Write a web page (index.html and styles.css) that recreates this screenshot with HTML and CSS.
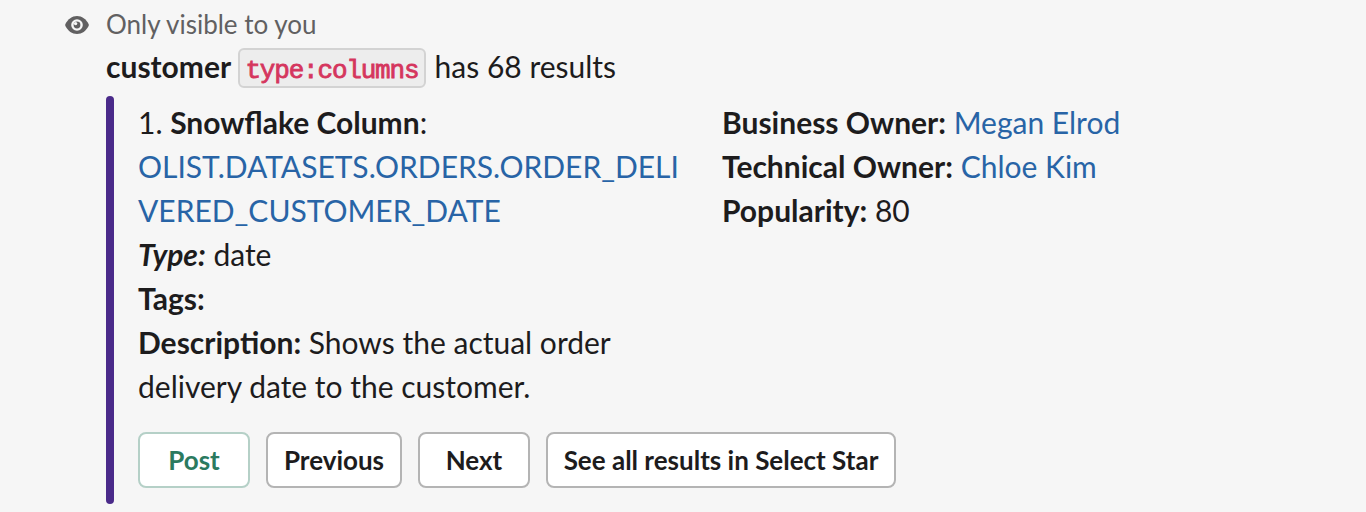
FILE: index.html
```html
<!DOCTYPE html>
<html lang="en">
<head>
    <meta charset="UTF-8">
    <meta name="viewport" content="width=device-width, initial-scale=1.0">
    <title>Select Star results</title>
    <link rel="stylesheet" href="styles.css">
</head>
<body>

    <div class="message">
        <div class="visibility">
            <svg class="eye" viewBox="0 0 24 18" width="24" height="18">
                <path d="M0.400 8C3 3 7 0 12 0S21 3 23.600 8Q24 9 23.600 10C21 15 17 18 12 18S3 15 0.400 10Q0 9 0.400 8Z" fill="#616061"/>
                <circle cx="12" cy="9" r="5.800" fill="#f6f6f6"/>
                <circle cx="12" cy="9" r="3.400" fill="#616061"/>
                <circle cx="10.600" cy="7.600" r="1.700" fill="#f6f6f6"/>
            </svg>
            <span>Only visible to you</span>
        </div>

        <div class="summary"><b>customer</b> <code>type:columns</code> has 68 results</div>

        <div class="attachment">
            <div class="bar"></div>
            <div class="content">
                <div class="fields">
                    <div class="field">
                        1. <b>Snowflake Column</b>:<br>
                        <a href="#">OLIST.DATASETS.ORDERS.ORDER_DELIVERED_CUSTOMER_DATE</a><br>
                        <b><i>Type:</i></b> date<br>
                        <b>Tags:</b><br>
                        <b>Description:</b> Shows the actual order delivery date to the customer.
                    </div>
                    <div class="field">
                        <b>Business Owner:</b> <a href="#">Megan Elrod</a><br>
                        <b>Technical Owner:</b> <a href="#">Chloe Kim</a><br>
                        <b>Popularity:</b> 80
                    </div>
                </div>
                <div class="actions">
                    <button class="primary post">Post</button>
                    <button class="previous">Previous</button>
                    <button class="next">Next</button>
                    <button class="see-all">See all results in Select Star</button>
                </div>
            </div>
        </div>
    </div>

</body>
</html>
```

FILE: styles.css
```css
* {
    box-sizing: border-box;
}

body {
    margin: 0;
    height: 512px;
    overflow: hidden;
    background-color: #f6f6f6;
    color: #1d1c1d;
    font-family: Lato, sans-serif;
    font-size: 30px;
    line-height: 44px;
}

a {
    color: #2864a6;
    text-decoration: none;
}

.message {
    padding: 6px 0 0 65px;
}

.visibility {
    display: flex;
    align-items: center;
    gap: 17px;
    height: 36px;
    color: #616061;
    font-size: 26px;
    line-height: 36px;
}

.eye {
    margin-top: 2px;
}

.summary {
    height: 44px;
    margin: 2px 0 8px 41px;
    white-space: nowrap;
}

code {
    display: inline-block;
    height: 40px;
    margin: 4px 1px 0 -1px;
    padding: 0 5.6px;
    border: 2px solid #d3d3d3;
    border-radius: 6px;
    background-color: #ededed;
    color: #d5365e;
    font-family: "Liberation Mono", monospace;
    font-size: 26px;
    letter-spacing: -1.2px;
    line-height: 42px;
    vertical-align: top;
    -webkit-text-stroke: 0.8px #d5365e;
}

.attachment {
    display: flex;
    height: 408px;
    margin-left: 41px;
}

.bar {
    width: 8px;
    border-radius: 4px;
    background-color: #4a2a8a;
}

.content {
    padding: 4px 0 0 24px;
}

.fields {
    display: grid;
    grid-template-columns: 552px 552px;
    gap: 32px;
}

.field {
    overflow-wrap: anywhere;
}

.actions {
    display: flex;
    gap: 16px;
    margin-top: 24px;
}

button {
    height: 56px;
    padding: 0;
    border: 2px solid #b4b4b4;
    border-radius: 8px;
    background-color: #ffffff;
    color: #1d1c1d;
    font-family: Lato, sans-serif;
    font-size: 26px;
    font-weight: 700;
}

.primary {
    border-color: #b5d0c7;
    color: #2b7a5f;
}

.post {
    width: 112px;
}

.previous {
    width: 136px;
}

.next {
    width: 112px;
}

.see-all {
    width: 350px;
}
```
